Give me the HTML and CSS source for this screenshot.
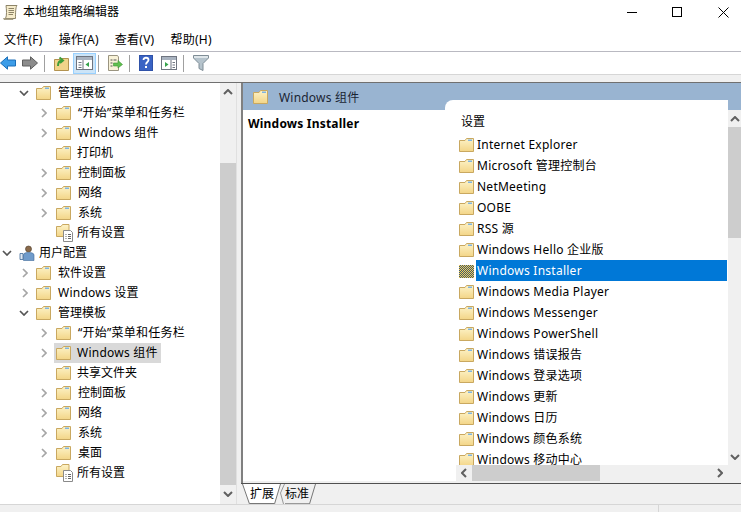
FILE: index.html
```html
<!DOCTYPE html>
<html lang="zh">
<head>
<meta charset="utf-8">
<title>本地组策略编辑器</title>
<link rel="stylesheet" href="styles.css">
</head>
<body>
<svg class="defs" width="0" height="0">
  <defs>
    <linearGradient id="fg" x1="0" y1="0" x2="0" y2="1"><stop offset="0" stop-color="#fdf3c8"/><stop offset="1" stop-color="#f3d587"/></linearGradient>
    <pattern id="hatch" width="2" height="2" patternUnits="userSpaceOnUse"><rect width="2" height="2" fill="#f5cf5a"/><rect width="1" height="1" fill="#3f5a70"/><rect x="1" y="1" width="1" height="1" fill="#3f5a70"/></pattern>
    <symbol id="folder" viewBox="0 0 15 14">
      <path d="M.5 2.500V13.500H14.500V.5H7.500L6 2.500Z" fill="url(#fg)" stroke="#c9a860"/>
      <rect x="9" y="1.500" width="4" height="1.500" fill="#7fb4e0"/>
    </symbol>
    <symbol id="open" viewBox="0 0 10 6"><path d="M1 1L5 5L9 1" fill="none" stroke="#555" stroke-width="1.700"/></symbol>
    <symbol id="closed" viewBox="0 0 6 10"><path d="M1 1L5 5L1 9" fill="none" stroke="#a6a6a6" stroke-width="1.700"/></symbol>
    <symbol id="settings" viewBox="0 0 18 18">
      <path d="M.5 2.500V12.500H13V.5H6.500L5 2.500Z" fill="url(#fg)" stroke="#c9a860"/>
      <path d="M7.500 6.500H14.500L16.500 8.500V17.500H7.500Z" fill="#fff" stroke="#8a8a8a"/>
      <path d="M9.500 10.500h1M12 10.500h3M9.500 12.500h1M12 12.500h3M9.500 14.500h1M12 14.500h3" stroke="#666"/>
    </symbol>
  </defs>
</svg>
<div class="window">
  <header class="titlebar">
    <svg class="app-icon" width="15" height="16" viewBox="0 0 15 16"><path d="M3 1.500H14C12.500 3 12.500 10 12.500 14.500H2.500C4 12 3.500 5 3 1.500Z" fill="#f6eccb" stroke="#8d8468"/><path d="M.5 14.500H10V15.500H1Z" fill="#d8cfae" stroke="#8d8468" stroke-width=".7"/><path d="M5.500 4.500H11M5.500 6.500H11M5.500 8.500H11M5.500 10.500H10" stroke="#8d8468"/></svg>
    <span class="title">本地组策略编辑器</span>
    <div class="controls">
      <svg class="ctl-min" width="10" height="1" viewBox="0 0 10 1"><rect width="10" height="1" fill="#000"/></svg>
      <svg class="ctl-max" width="10" height="10" viewBox="0 0 10 10"><rect x=".5" y=".5" width="9" height="9" fill="none" stroke="#000"/></svg>
      <svg class="ctl-close" width="11" height="11" viewBox="0 0 11 11"><path d="M.5 .5L10.500 10.500M10.500 .5L.5 10.500" stroke="#000"/></svg>
    </div>
  </header>
  <nav class="menubar">
    <span>文件(F)</span><span>操作(A)</span><span>查看(V)</span><span>帮助(H)</span>
  </nav>
  <div class="toolbar">
    <svg class="t-back" width="16" height="14" viewBox="0 0 16 14"><path d="M.5 7L7.500 .8V4H15.500V10H7.500V13.200Z" fill="#3d9de8" stroke="#1c6fb8"/></svg>
    <svg class="t-fwd" width="16" height="14" viewBox="0 0 16 14"><path d="M15.500 7L8.500 .8V4H.5V10H8.500V13.200Z" fill="#8c8c8c" stroke="#5e5e5e"/></svg>
    <i class="sep s1"></i>
    <svg class="t-up" width="15" height="15" viewBox="0 0 15 15"><path d="M.5 3.500V14.500H14.500V2.500H7.500L6 3.500Z" fill="#f2d48a" stroke="#b39350"/><path d="M4 10C4 6 6 4.500 8 4.500M5.500 1.500L9 4.500L6 7" fill="none" stroke="#3f9e3a" stroke-width="2"/></svg>
    <div class="t-active"><svg width="17" height="14" viewBox="0 0 17 14"><rect x=".5" y=".5" width="16" height="13" fill="#fff" stroke="#6f7580"/><rect x="1" y="1" width="15" height="3" fill="#a9b3c0"/><path d="M2.500 6h3v1h-3zM2.500 8.500h3v1h-3zM2.500 11h3v1h-3z" fill="#6f7580"/><path d="M7 4V13" stroke="#6f7580"/><path d="M13 6V11L9.500 8.500Z" fill="#35a24a"/></svg></div>
    <i class="sep s2"></i>
    <svg class="t-export" width="16" height="16" viewBox="0 0 16 16"><path d="M1.500 .5H10.500L11.500 2V15.500H1.500Z" fill="#f8f2d8" stroke="#9a9480"/><path d="M3.500 5h2M3.500 8h2M3.500 11h2M6.500 5h3" stroke="#555"/><path d="M6.500 8H11V5.500L15.500 9.500L11 13V11H6.500Z" fill="#5fbf4e" stroke="#3f9437" stroke-width=".6"/></svg>
    <i class="sep s3"></i>
    <svg class="t-help" width="14" height="16" viewBox="0 0 14 16"><rect width="14" height="16" fill="#2f52a8"/><rect x="1" y="1" width="12" height="14" fill="#3a63c4"/><path d="M4.500 5C4.500 2 9.500 2 9.500 5C9.500 7 7 7 7 9.500" fill="none" stroke="#fff" stroke-width="1.800"/><rect x="6" y="11" width="2" height="2" fill="#fff"/></svg>
    <svg class="t-view" width="16" height="14" viewBox="0 0 16 14"><rect x=".5" y=".5" width="15" height="13" fill="#fff" stroke="#6f7580"/><rect x="1" y="1" width="14" height="3" fill="#a9b3c0"/><path d="M10 4V13" stroke="#6f7580"/><path d="M11.500 6h2.500v1h-2.500zM11.500 8.500h2.500v1h-2.500zM11.500 11h2.500v1h-2.500z" fill="#6f7580"/><path d="M4 6V11L7.500 8.500Z" fill="#35a24a"/></svg>
    <i class="sep s4"></i>
    <svg class="t-filter" width="16" height="16" viewBox="0 0 16 16"><path d="M.5 .5H15.500V3L10 8.500V15.500L6 13.500V8.500L.5 3Z" fill="#b5c3cc" stroke="#7f8d96"/><path d="M1 1H15V3H1Z" fill="#dfe6ea"/></svg>
  </div>
  <div class="strip"></div>
  <main class="panes">
    <aside class="tree-pane">
      <div class="tree">
        <div class="row l1"><svg class="chev-o"><use href="#open"/></svg><svg class="ico"><use href="#folder"/></svg><span>管理模板</span></div>
        <div class="row l2"><svg class="chev-c"><use href="#closed"/></svg><svg class="ico"><use href="#folder"/></svg><span class="ls">“开始”菜单和任务栏</span></div>
        <div class="row l2"><svg class="chev-c"><use href="#closed"/></svg><svg class="ico"><use href="#folder"/></svg><span class="ls">Windows 组件</span></div>
        <div class="row l2 leaf"><svg class="ico"><use href="#folder"/></svg><span>打印机</span></div>
        <div class="row l2"><svg class="chev-c"><use href="#closed"/></svg><svg class="ico"><use href="#folder"/></svg><span>控制面板</span></div>
        <div class="row l2"><svg class="chev-c"><use href="#closed"/></svg><svg class="ico"><use href="#folder"/></svg><span>网络</span></div>
        <div class="row l2"><svg class="chev-c"><use href="#closed"/></svg><svg class="ico"><use href="#folder"/></svg><span>系统</span></div>
        <div class="row l2 leaf"><svg class="ico-s"><use href="#settings"/></svg><span>所有设置</span></div>
        <div class="row l0"><svg class="chev-o"><use href="#open"/></svg><svg class="ico-u" viewBox="0 0 16 16"><circle cx="9.500" cy="4" r="3" fill="#8a6a4a" stroke="#4a3a2a" stroke-width=".6"/><path d="M4.500 15.500V10C4.500 8 7 7.500 9.500 7.500S15 8 15 10V15.500Z" fill="#6f9bcb" stroke="#3f6a99" stroke-width=".6"/><path d="M1 8.500h3v6H1z" fill="#dfe8f2" stroke="#3f6a99" stroke-width=".8"/></svg><span>用户配置</span></div>
        <div class="row l1"><svg class="chev-c"><use href="#closed"/></svg><svg class="ico"><use href="#folder"/></svg><span>软件设置</span></div>
        <div class="row l1"><svg class="chev-c"><use href="#closed"/></svg><svg class="ico"><use href="#folder"/></svg><span class="ls">Windows 设置</span></div>
        <div class="row l1"><svg class="chev-o"><use href="#open"/></svg><svg class="ico"><use href="#folder"/></svg><span>管理模板</span></div>
        <div class="row l2"><svg class="chev-c"><use href="#closed"/></svg><svg class="ico"><use href="#folder"/></svg><span class="ls">“开始”菜单和任务栏</span></div>
        <div class="row l2"><svg class="chev-c"><use href="#closed"/></svg><div class="sel"><svg class="ico"><use href="#folder"/></svg><span class="ls">Windows 组件</span></div></div>
        <div class="row l2 leaf"><svg class="ico"><use href="#folder"/></svg><span>共享文件夹</span></div>
        <div class="row l2"><svg class="chev-c"><use href="#closed"/></svg><svg class="ico"><use href="#folder"/></svg><span>控制面板</span></div>
        <div class="row l2"><svg class="chev-c"><use href="#closed"/></svg><svg class="ico"><use href="#folder"/></svg><span>网络</span></div>
        <div class="row l2"><svg class="chev-c"><use href="#closed"/></svg><svg class="ico"><use href="#folder"/></svg><span>系统</span></div>
        <div class="row l2"><svg class="chev-c"><use href="#closed"/></svg><svg class="ico"><use href="#folder"/></svg><span>桌面</span></div>
        <div class="row l2 leaf"><svg class="ico-s"><use href="#settings"/></svg><span>所有设置</span></div>
      </div>
      <div class="vbar tree-bar">
        <div class="arrow"><svg width="10" height="6" viewBox="0 0 10 6"><path d="M1 5L5 1L9 5" fill="none" stroke="#606060" stroke-width="2"/></svg></div>
        <div class="track-a"></div>
        <div class="thumb"></div>
        <div class="arrow"><svg width="10" height="6" viewBox="0 0 10 6"><path d="M1 1L5 5L9 1" fill="none" stroke="#606060" stroke-width="2"/></svg></div>
      </div>
    </aside>
    <div class="splitter"></div>
    <section class="content">
      <div class="content-head"><svg class="head-ico"><use href="#folder"/></svg><span>Windows 组件</span></div>
      <div class="content-body">
        <div class="desc"><h1>Windows Installer</h1></div>
        <div class="listwrap">
          <div class="listcol">
            <div class="list-title">设置</div>
            <div class="list">
              <div class="item"><svg class="ico-l"><use href="#folder"/></svg><span>Internet Explorer</span></div>
              <div class="item"><svg class="ico-l"><use href="#folder"/></svg><span>Microsoft 管理控制台</span></div>
              <div class="item"><svg class="ico-l"><use href="#folder"/></svg><span>NetMeeting</span></div>
              <div class="item"><svg class="ico-l"><use href="#folder"/></svg><span>OOBE</span></div>
              <div class="item"><svg class="ico-l"><use href="#folder"/></svg><span>RSS 源</span></div>
              <div class="item"><svg class="ico-l"><use href="#folder"/></svg><span>Windows Hello 企业版</span></div>
              <div class="item active"><svg class="ico-l" viewBox="0 0 15 14"><rect y="1" width="15" height="13" fill="url(#hatch)"/></svg><span>Windows Installer</span></div>
              <div class="item"><svg class="ico-l"><use href="#folder"/></svg><span>Windows Media Player</span></div>
              <div class="item"><svg class="ico-l"><use href="#folder"/></svg><span>Windows Messenger</span></div>
              <div class="item"><svg class="ico-l"><use href="#folder"/></svg><span>Windows PowerShell</span></div>
              <div class="item"><svg class="ico-l"><use href="#folder"/></svg><span>Windows 错误报告</span></div>
              <div class="item"><svg class="ico-l"><use href="#folder"/></svg><span>Windows 登录选项</span></div>
              <div class="item"><svg class="ico-l"><use href="#folder"/></svg><span>Windows 更新</span></div>
              <div class="item"><svg class="ico-l"><use href="#folder"/></svg><span>Windows 日历</span></div>
              <div class="item"><svg class="ico-l"><use href="#folder"/></svg><span>Windows 颜色系统</span></div>
              <div class="item"><svg class="ico-l"><use href="#folder"/></svg><span>Windows 移动中心</span></div>
            </div>
            <div class="hbar">
              <div class="harrow"><svg width="6" height="10" viewBox="0 0 6 10"><path d="M5 1L1 5L5 9" fill="none" stroke="#606060" stroke-width="2"/></svg></div>
              <div class="hthumb"></div>
              <div class="htrack"></div>
              <div class="harrow"><svg width="6" height="10" viewBox="0 0 6 10"><path d="M1 1L5 5L1 9" fill="none" stroke="#606060" stroke-width="2"/></svg></div>
            </div>
          </div>
          <div class="vbar list-bar">
            <div class="arrow"><svg width="10" height="6" viewBox="0 0 10 6"><path d="M1 5L5 1L9 5" fill="none" stroke="#606060" stroke-width="2"/></svg></div>
            <div class="thumb"></div>
            <div class="track-b"></div>
            <div class="arrow"><svg width="10" height="6" viewBox="0 0 10 6"><path d="M1 1L5 5L9 1" fill="none" stroke="#606060" stroke-width="2"/></svg></div>
          </div>
        </div>
      </div>
      <div class="tabs">
        <div class="tab tab-on">
          <svg width="8" height="20" viewBox="0 0 8 20"><path d="M0 0L8 20H8V0Z" fill="#fff"/><path d="M.5 0L7.500 20" stroke="#777"/></svg>
          <span>扩展</span>
          <svg width="7" height="20" viewBox="0 0 7 20"><path d="M0 0V20L7 0Z" fill="#fff"/><path d="M.5 20L6.500 0" stroke="#777"/></svg>
        </div>
        <div class="tab tab-off">
          <svg width="5" height="20" viewBox="0 0 5 20"><path d="M4.500 0L.5 9L3.500 20" fill="none" stroke="#999"/></svg>
          <span>标准</span>
          <svg width="7" height="20" viewBox="0 0 7 20"><path d="M.5 20L6.500 0" stroke="#777"/></svg>
        </div>
      </div>
    </section>
  </main>
  <footer class="status"><div class="status-main"></div><div class="status-side"></div></footer>
</div>
</body>
</html>
```
FILE: styles.css
```css
* { box-sizing: border-box; }
html, body { margin: 0; padding: 0; }
body {
  width: 741px;
  height: 512px;
  overflow: hidden;
  background: #fff;
  color: #000;
  font: 12px/16px "Noto Sans", "Noto Sans CJK SC", sans-serif;
}
svg { display: block; flex: none; }
.defs { position: absolute; }
.window { display: flex; flex-direction: column; width: 741px; height: 512px; }

.titlebar { display: flex; align-items: center; height: 30px; padding: 0 0 6px 3px; }
.app-icon { margin-right: 5px; }
.controls { display: flex; align-items: center; margin-left: auto; }
.ctl-min { margin-right: 35px; }
.ctl-max { margin-right: 36px; }
.ctl-close { margin-right: 12px; }

.menubar { display: flex; gap: 16px; height: 22px; padding: 2px 0 0 4px; border-bottom: 1px solid #b9b9c1; letter-spacing: .25px; }

.toolbar { display: flex; align-items: center; height: 23px; background: #fff; border-bottom: 1px solid #d6d6d6; }
.t-back { margin-right: 6px; }
.sep { display: block; width: 1px; height: 17px; background: #a0a0a0; flex: none; }
.s1 { margin: 0 9px 0 6px; }
.t-up { margin-right: 4px; }
.t-active { display: flex; align-items: center; justify-content: center; width: 23px; height: 21px; background: #cce4f7; border: 1px solid #99d1ff; }
.s2 { margin: 0 8px 0 2px; }
.t-export { margin-right: 6px; }
.s3 { margin: 0 9px 0 0; }
.t-help { margin-right: 8px; }
.s4 { margin: 0 9px 0 6px; }

.strip { height: 8px; background: #f0f0f0; border-bottom: 1px solid #707070; }

.panes { display: flex; flex: 1; min-height: 0; }
.tree-pane { display: flex; width: 236px; background: #fff; }
.tree { width: 220px; overflow: hidden; }
.row { display: flex; align-items: center; height: 20px; white-space: nowrap; }
.ls { letter-spacing: .25px; }
.l0 { padding-left: 2px; }
.l1 { padding-left: 19px; }
.l2 { padding-left: 41px; }
.leaf { padding-left: 56px; }
.chev-o { width: 10px; height: 6px; margin-right: 7px; }
.chev-c { width: 6px; height: 10px; margin-right: 9px; }
.l1 .chev-c { margin-left: 3px; margin-right: 8px; }
.ico { width: 15px; height: 14px; margin-right: 7px; }
.ico-s { width: 18px; height: 18px; margin-right: 3px; }
.leaf .ico { margin-right: 6px; }
.ico-u { width: 16px; height: 16px; margin-right: 4px; }
.sel { display: flex; align-items: center; height: 20px; margin-left: -2px; padding: 0 3px 0 2px; background: #d9d9d9; }
.sel .ico { margin-right: 6px; }

.vbar { display: flex; flex-direction: column; background: #f0f0f0; flex: none; }
.tree-bar { width: 16px; }
.arrow { display: flex; align-items: center; justify-content: center; height: 17px; flex: none; }
.tree-bar .thumb { height: 322px; background: #cdcdcd; }
.track-a { height: 63px; }
.list-bar { width: 13px; margin-top: 10px; height: 355px; }
.list-bar .thumb { height: 111px; background: #cdcdcd; }
.track-b { flex: 1; }

.splitter { width: 5px; background: #f0f0f0; border-left: 1px solid #e0e0e0; }

.content { display: flex; flex-direction: column; width: 500px; border-left: 2px solid #808080; background: #f0f0f0; }
.content-head { display: flex; align-items: flex-start; gap: 11px; height: 27px; padding: 7px 0 0 10px; background: #99b4d1; color: #1a2433; }
.head-ico { width: 15px; height: 14px; }
.content-head span { line-height: 16px; letter-spacing: .2px; }
.content-body { display: flex; height: 381px; margin-top: -10px; }
.desc { width: 202px; margin-top: 10px; background: #fff; padding: 0 0 0 5px; }
.desc h1 { margin: 0; font-size: 12px; line-height: 28px; font-weight: 700; letter-spacing: .2px; }
.listwrap { display: flex; flex: 1; min-width: 0; }
.listcol { display: flex; flex-direction: column; width: 283px; background: #fff; border-top-left-radius: 8px; }
.list-title { height: 34px; padding: 13px 0 0 16px; line-height: 18px; }
.list { flex: 1; min-height: 0; overflow: hidden; padding: 0 1px 0 14px; letter-spacing: .25px; }
.item { display: flex; align-items: center; height: 21px; white-space: nowrap; }
.ico-l { width: 15px; height: 14px; margin-right: 2px; }
.item span { flex: 1; height: 21px; line-height: 21px; padding-left: 1px; }
.active span { background: #0078d7; color: #fff; }
.hbar { display: flex; align-items: center; height: 16px; flex: none; margin-left: 11px; background: #f0f0f0; }
.harrow { display: flex; align-items: center; justify-content: center; width: 16px; height: 16px; flex: none; }
.hthumb { width: 128px; height: 16px; background: #cdcdcd; }
.htrack { flex: 1; }

.tabs { display: flex; height: 21px; background: #f0f0f0; border-top: 1px solid #505050; margin-top: 2px; margin-left: -2px; }
.tab { display: flex; height: 20px; }
.tab span { line-height: 19px; width: 24px; }
.tab-on span { background: #fff; border-bottom: 1px solid #777; }
.tab-on { margin-left: 1px; }
.tab-off span { border-bottom: 1px solid #999; }
.tab-off { margin-left: -1px; }

.status { display: flex; height: 8px; background: #f0f0f0; border-top: 1px solid #d6d6d6; }
.status-main { width: 658px; }
.status-side { flex: 1; border-left: 1px solid #d6d6d6; }
```
